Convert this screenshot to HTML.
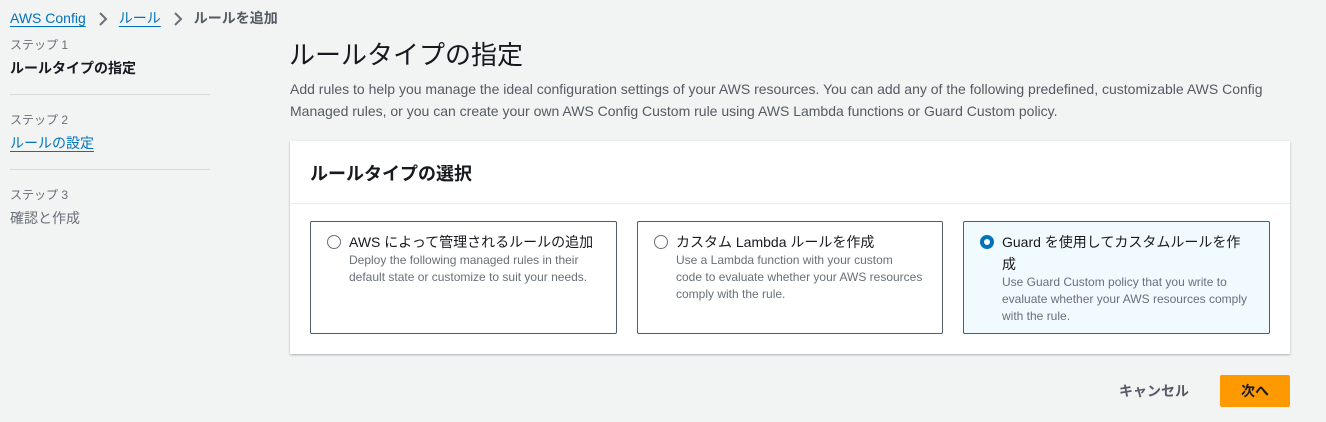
<!DOCTYPE html>
<html><head><meta charset="utf-8"><style>
*{margin:0;padding:0;box-sizing:border-box}
body{width:1326px;height:422px;background:#f2f3f3;font-family:"Liberation Sans","Noto Sans CJK JP",sans-serif;color:#16191f;position:relative;overflow:hidden}
.a{position:absolute;white-space:nowrap}
.link{color:#0073bb;text-decoration:underline;text-underline-offset:3px}
.gray{color:#687078}
.hr{position:absolute;left:10px;width:200px;height:1px;background:#d5dbdb}
.panel{position:absolute;left:290px;top:141px;width:1000px;height:213px;background:#fff;box-shadow:0 1px 2px rgba(0,28,36,.3)}
.card{position:absolute;top:221px;height:113px;border:1px solid #545b64;border-radius:2px;background:#fff}
.radio{position:absolute;left:16px;top:13px;width:14px;height:14px;border:1.5px solid #687078;border-radius:50%}
.ct{position:absolute;left:38px;top:9px;font-size:14px;line-height:22px}
.cd{position:absolute;left:38px;top:30px;font-size:12px;line-height:17px;color:#687078}
.chev{display:inline-block;vertical-align:middle;margin:0 11px 0 12px}
</style></head><body>
<div class="a" style="left:10px;top:8px;font-size:14px"><span class="link">AWS Config</span><svg class="chev" width="10" height="14" viewBox="0 0 10 14"><path d="M2 1l6 6-6 6" fill="none" stroke="#687078" stroke-width="2"/></svg><span class="link">ルール</span><svg class="chev" width="10" height="14" viewBox="0 0 10 14"><path d="M2 1l6 6-6 6" fill="none" stroke="#687078" stroke-width="2"/></svg><span style="color:#545b64;font-weight:bold">ルールを追加</span></div>
<div class="a gray" style="left:10px;top:36px;font-size:12px">ステップ 1</div>
<div class="a" style="left:10px;top:58px;font-size:14px;font-weight:bold">ルールタイプの指定</div>
<div class="hr" style="top:94px"></div>
<div class="a gray" style="left:10px;top:111px;font-size:12px">ステップ 2</div>
<div class="a link" style="left:10px;top:133px;font-size:14px">ルールの設定</div>
<div class="hr" style="top:169px"></div>
<div class="a gray" style="left:10px;top:186px;font-size:12px">ステップ 3</div>
<div class="a gray" style="left:10px;top:208px;font-size:14px">確認と作成</div>

<div class="a" style="left:289px;top:35px;font-size:26px;color:#16191f">ルールタイプの指定</div>
<div class="a gray" style="left:290px;top:78px;font-size:14px;line-height:22px;white-space:normal;width:1020px;color:#545b64">Add rules to help you manage the ideal configuration settings of your AWS resources. You can add any of the following predefined, customizable AWS Config Managed rules, or you can create your own AWS Config Custom rule using AWS Lambda functions or Guard Custom policy.</div>

<div class="panel">
<div class="a" style="left:20px;top:19px;font-size:18px;font-weight:bold">ルールタイプの選択</div>
<div style="position:absolute;left:0;top:62px;width:1000px;height:1px;background:#eaeded"></div>
</div>
<div class="card" style="left:310px;width:307px"><div class="radio"></div><div class="ct">AWS によって管理されるルールの追加</div><div class="cd">Deploy the following managed rules in their<br>default state or customize to suit your needs.</div></div>
<div class="card" style="left:637px;width:306px"><div class="radio"></div><div class="ct">カスタム Lambda ルールを作成</div><div class="cd">Use a Lambda function with your custom<br>code to evaluate whether your AWS resources<br>comply with the rule.</div></div>
<div class="card" style="left:963px;width:307px;border-color:#0073bb;background:#f1faff"><div class="radio" style="border:4px solid #0073bb;background:#fff"></div><div class="ct">Guard を使用してカスタムルールを作<br>成</div><div class="cd" style="top:52px">Use Guard Custom policy that you write to<br>evaluate whether your AWS resources comply<br>with the rule.</div></div>

<div class="a" style="left:1119px;top:381px;font-size:14px;font-weight:bold;color:#545b64">キャンセル</div>
<div style="position:absolute;left:1220px;top:375px;width:70px;height:32px;background:#ff9900;border-radius:2px;font-size:14px;font-weight:bold;text-align:center;line-height:32px">次へ</div>
</body></html>
